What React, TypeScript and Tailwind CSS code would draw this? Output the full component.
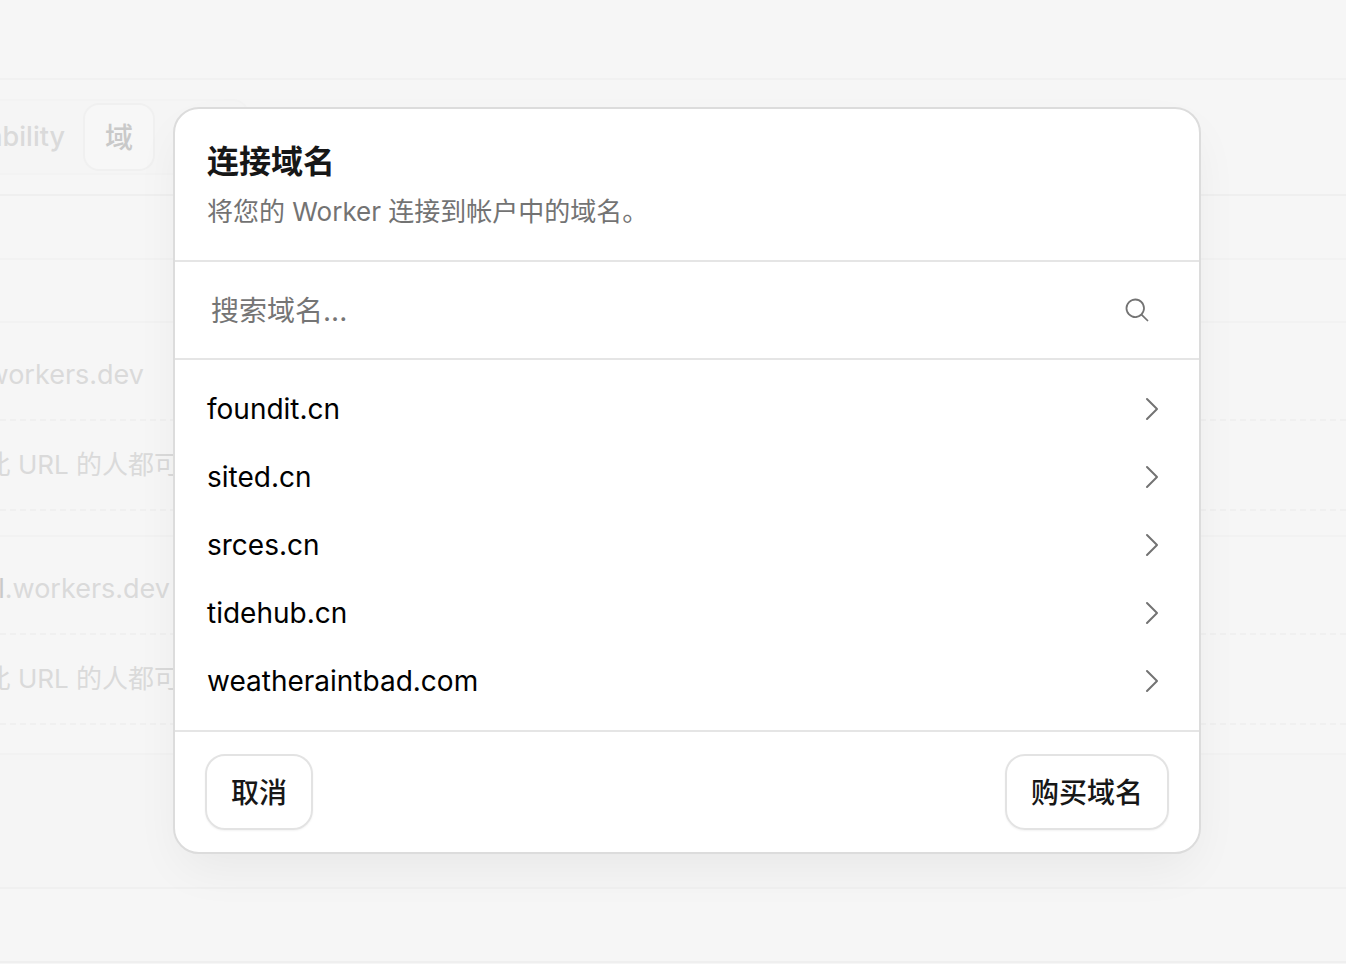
import { PiCaretRight, PiMagnifyingGlass } from "react-icons/pi";

const domains = ["foundit.cn", "sited.cn", "srces.cn", "tidehub.cn", "weatheraintbad.com"];

function WorkerPage() {
  return (
    <div className="min-h-screen overflow-hidden bg-[#f6f6f6] text-[27px] text-[#dadada]" aria-hidden="true">
      <div className="h-20 border-b-2 border-[#f1f1f1]" />
      <div className="flex h-[116px] items-center border-b-2 border-[#efefef]">
        <div className="flex h-19 w-[249px] items-center justify-end rounded-r-2xl border-2 border-l-0 border-[#f3f3f3] bg-[#f5f5f5]">
          <span className="mr-[18px] shrink-0 font-medium">Observability</span>
          <span className="flex h-[68px] shrink-0 items-center rounded-2xl border-2 border-[#f0f0f0] bg-[#f7f7f7] px-5 pt-0.5 text-[28px] font-medium text-[#c9c9c9]">
            域
          </span>
          <span className="w-[92px] shrink-0" />
        </div>
      </div>
      <div className="h-16 border-b-2 border-[#f2f2f2]" />
      <div className="h-[63px] border-b-2 border-[#f2f2f2]" />
      <div className="flex h-[98px] items-center border-b-2 border-dashed border-[#f0f0f0] pt-2">
        <span className="flex w-36 justify-end">.workers.dev</span>
      </div>
      <div className="flex h-[90px] items-center border-b-2 border-dashed border-[#f0f0f0] pb-0.5 text-[26px]">
        <span className="flex w-[180px] justify-end whitespace-nowrap">此 URL 的人都可</span>
      </div>
      <div className="h-[26px] border-b-2 border-[#f2f2f2]" />
      <div className="flex h-[98px] items-center border-b-2 border-dashed border-[#f0f0f0] pt-2">
        <span className="flex w-[170px] justify-end">
          <span className="text-[#c9c9c9]">l</span>.workers.dev
        </span>
      </div>
      <div className="flex h-[90px] items-center border-b-2 border-dashed border-[#f0f0f0] pb-0.5 text-[26px]">
        <span className="flex w-[180px] justify-end whitespace-nowrap">此 URL 的人都可</span>
      </div>
      <div className="h-[30px] border-b-2 border-[#f2f2f2]" />
      <div className="h-[134px] border-b-2 border-[#f0f0f0] bg-[#f5f5f5]" />
      <div className="h-[74px] border-b-2 border-[#efefef]" />
    </div>
  );
}

function ConnectDomainDialog() {
  return (
    <div
      role="dialog"
      aria-labelledby="dialog-title"
      className="w-full max-w-[1028px] rounded-[26px] border-2 border-[#dcdcdc] bg-white shadow-[0_20px_50px_-8px_rgba(0,0,0,0.06)]"
    >
      <header className="border-b-2 border-[#e5e5e5] px-8 pt-8 pb-[27px]">
        <h1 id="dialog-title" className="text-[32px] leading-[42px] font-semibold text-[#171717]">
          连接域名
        </h1>
        <p className="mt-2 text-[26px] leading-[42px] text-[#737373]">将您的 Worker 连接到帐户中的域名。</p>
      </header>

      <label className="flex h-[98px] items-center border-b-2 border-[#e5e5e5] pr-12 pl-9">
        <input
          type="text"
          aria-label="搜索域名"
          placeholder="搜索域名..."
          className="h-full min-w-0 flex-1 pt-0.5 text-[28px] outline-none placeholder:text-[#757575]"
        />
        <PiMagnifyingGlass className="size-7 text-[#737373]" />
      </label>

      <ul className="py-[15px]">
        {domains.map((domain) => (
          <li key={domain}>
            <button className="flex h-17 w-full items-center justify-between px-8 text-left text-[28px] text-black">
              {domain}
              <PiCaretRight className="size-8 text-[#737373]" />
            </button>
          </li>
        ))}
      </ul>

      <footer className="flex justify-between border-t-2 border-[#e5e5e5] px-[30px] py-[22px]">
        <button className="h-19 rounded-[20px] border-2 border-[#e3e3e3] px-6 pt-0.5 text-[28px] font-medium text-[#171717] shadow-xs">
          取消
        </button>
        <button className="h-19 rounded-[20px] border-2 border-[#e3e3e3] px-6 pt-0.5 text-[28px] font-medium text-[#171717] shadow-xs">
          购买域名
        </button>
      </footer>
    </div>
  );
}

export default function App() {
  return (
    <div className="relative min-h-screen overflow-hidden font-['Inter','Noto_Sans_CJK_SC',sans-serif]">
      <WorkerPage />
      <div className="absolute inset-0 flex items-start justify-center pt-[107px] pl-7">
        <ConnectDomainDialog />
      </div>
    </div>
  );
}
